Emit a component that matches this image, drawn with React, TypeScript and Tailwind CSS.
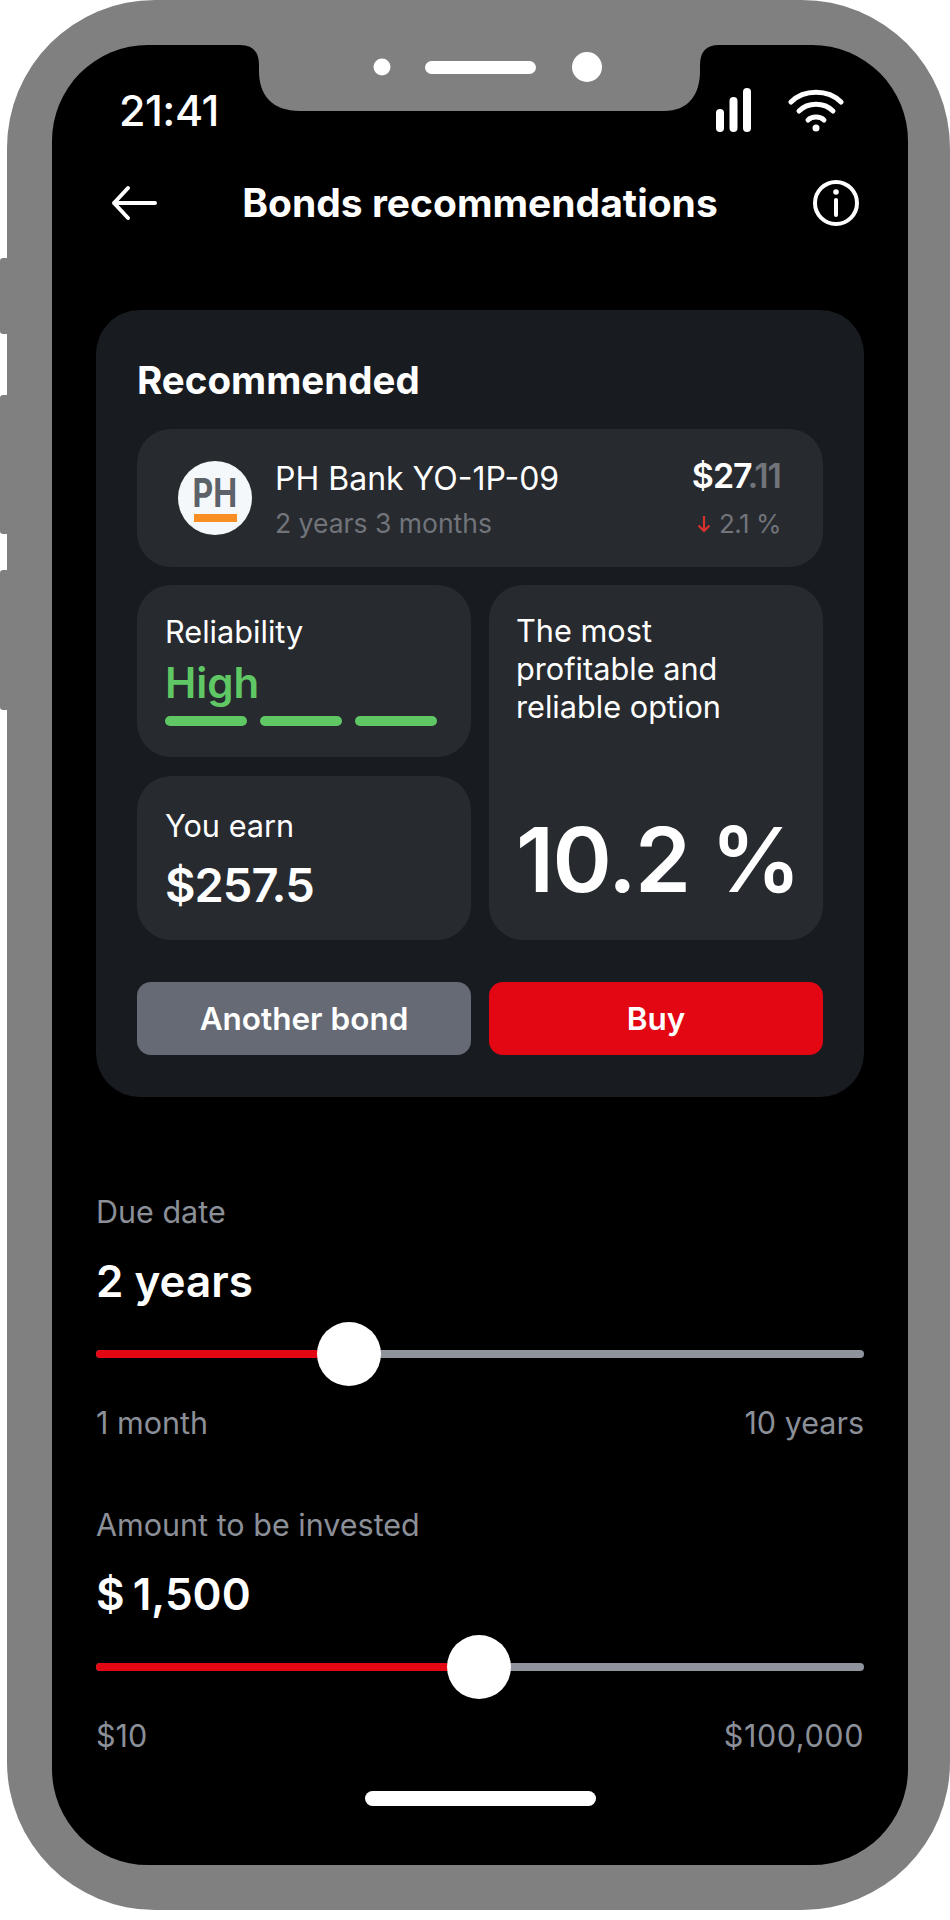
function Slider({ label, value, min, max, fill, thumb, maxClass = "", valueClass = "" }: { label: string; value: string; min: string; max: string; fill: string; thumb: string; maxClass?: string; valueClass?: string }) {
  return (
    <div className="flex flex-col">
      <div className="h-[36px] text-[30.5px] leading-[36px] text-[#8b8f98]">{label}</div>
      <div className={`mt-[26px] h-[50px] text-[44px] leading-[50px] font-semibold text-white ${valueClass}`}>{value}</div>
      <div className="relative mt-[44px] h-[8px] rounded-full bg-[#8f939c]">
        <div className={`h-full rounded-full bg-[#e30613] ${fill}`} />
        <div className={`absolute top-[-28px] h-[64px] w-[64px] rounded-full bg-white ${thumb}`} />
      </div>
      <div className="mt-[47px] flex h-[36px] justify-between text-[30.5px] leading-[36px] text-[#8b8f98]">
        <span>{min}</span>
        <span className={maxClass}>{max}</span>
      </div>
    </div>
  );
}

export default function App() {
  return (
    <div className="relative h-[1920px] w-[950px] overflow-hidden bg-white font-['Inter',sans-serif]">
      <div className="absolute left-0 top-[258px] h-[76px] w-[10px] rounded-l-[3px] bg-[#808080]" />
      <div className="absolute left-0 top-[395px] h-[139px] w-[10px] rounded-l-[3px] bg-[#808080]" />
      <div className="absolute left-0 top-[570px] h-[140px] w-[10px] rounded-l-[3px] bg-[#808080]" />
      <div className="ml-[7px] h-[1910px] w-[943px] rounded-[148px] bg-[#808080] pl-[45px] pr-[42px] pt-[45px]">
        <div className="relative h-[1820px] w-[856px] overflow-hidden rounded-[96px] bg-black px-[44px] pt-[44px]">
          <svg className="absolute left-[170px] top-0" width="500" height="70" viewBox="0 0 500 70">
            <path d="M18 0 Q37 0 37 20 L37 26 C37 50 50 66 78 66 L442 66 C466 66 478 50 478 26 L478 20 Q478 0 497 0 Z" fill="#808080" />
            <circle cx="160" cy="22" r="8.5" fill="#fff" />
            <rect x="203" y="16" width="111" height="13" rx="6.5" fill="#fff" />
            <circle cx="365" cy="22" r="15" fill="#fff" />
          </svg>

          <div className="flex h-[40px] items-center justify-between">
            <span className="ml-[23px] mt-[2px] text-[43px] leading-[40px] font-medium tracking-[-0.5px] text-white">21:41</span>
            <div className="mr-[20px] flex items-end gap-[37px]">
              <svg width="35" height="44" viewBox="0 0 35 44" className="mt-[2px]">
                <rect x="0" y="21" width="8" height="23" rx="4" fill="#fff" />
                <rect x="13.5" y="9" width="8" height="35" rx="4" fill="#fff" />
                <rect x="27" y="0" width="8" height="44" rx="4" fill="#fff" />
              </svg>
              <svg width="56" height="44" viewBox="0 0 56 44" fill="none" stroke="#fff" strokeWidth="5" strokeLinecap="round">
                <path d="M3 14 C16 1 40 1 53 14" />
                <path d="M11 23 C20 14 36 14 45 23" />
                <path d="M20 32 C24 28 32 28 36 32" />
                <circle cx="28" cy="40" r="3.5" fill="#fff" stroke="none" />
              </svg>
            </div>
          </div>

          <div className="mt-[50px] grid h-[48px] grid-cols-[1fr_auto_1fr] items-center">
            <svg width="46" height="36" viewBox="0 0 46 36" fill="none" stroke="#fff" strokeWidth="4" strokeLinecap="round" strokeLinejoin="round" className="ml-[15px]">
              <path d="M44 18 H3 M17 3 L3 18 L17 33" />
            </svg>
            <span className="text-[39px] leading-[48px] font-bold text-white">Bonds recommendations</span>
            <svg width="46" height="46" viewBox="0 0 46 46" fill="none" stroke="#fff" strokeWidth="4" className="mr-[5px] justify-self-end">
              <circle cx="23" cy="23" r="21" />
              <path d="M23 20 L23 35" strokeLinecap="round" />
              <circle cx="23" cy="12" r="2.8" fill="#fff" stroke="none" />
            </svg>
          </div>

          <div className="mt-[83px] rounded-[44px] bg-[#181b1f] px-[41px] pb-[42px] pt-[48px]">
            <div className="h-[44px] text-[38.5px] leading-[44px] font-bold text-white">Recommended</div>
            <div className="mt-[27px] flex h-[138px] items-center justify-between rounded-[34px] bg-[#272a2f] pl-[41px] pr-[42px]">
              <div className="flex items-center gap-[23px]">
                <div className="flex h-[74px] w-[74px] flex-col items-center justify-center rounded-full bg-[#f4f8fb]">
                  <span className="h-[36px] scale-x-[0.8] text-[40px] leading-[36px] font-bold text-[#5c6268]">PH</span>
                  <div className="mt-[3px] h-[8px] w-[43px] bg-[#f98e25]" />
                </div>
                <div className="flex flex-col">
                  <span className="mt-[2px] h-[44px] text-[32px] leading-[44px] text-white">PH Bank YO-1P-09</span>
                  <span className="mt-[4px] h-[36px] text-[26.5px] leading-[36px] text-[#71747a]">2 years 3 months</span>
                </div>
              </div>
              <div className="flex flex-col items-end">
                <span className="h-[44px] text-[34px] leading-[44px] font-semibold tracking-[-1px] text-white">
                  $27<span className="text-[#71747a]">.11</span>
                </span>
                <span className="mt-[8px] flex h-[36px] items-center gap-[8px] text-[26px] leading-[36px] tracking-[-0.5px] text-[#71747a]">
                  <svg width="14" height="18" viewBox="0 0 14 18" fill="none" stroke="#d6322e" strokeWidth="2.2">
                    <path d="M7 1 L7 16 M1.5 10.5 L7 16 L12.5 10.5" />
                  </svg>
                  2.1 %
                </span>
              </div>
            </div>

            <div className="mt-[18px] grid grid-cols-[334px_334px] grid-rows-[172px_164px] gap-x-[18px] gap-y-[19px]">
              <div className="flex flex-col rounded-[34px] bg-[#272a2f] px-[28px] pt-[27px]">
                <span className="h-[40px] text-[30.7px] leading-[40px] text-white">Reliability</span>
                <span className="mt-[6px] h-[50px] text-[42px] leading-[50px] font-semibold text-[#5fc865]">High</span>
                <div className="mt-[8px] flex gap-[13px]">
                  <div className="h-[10px] w-[82px] rounded-full bg-[#5fc865]" />
                  <div className="h-[10px] w-[82px] rounded-full bg-[#5fc865]" />
                  <div className="h-[10px] w-[82px] rounded-full bg-[#5fc865]" />
                </div>
              </div>
              <div className="row-span-2 flex flex-col justify-between rounded-[34px] bg-[#272a2f] px-[27px] pb-[30px] pt-[27px]">
                <div className="text-[30.7px] leading-[38px] text-white">The most<br />profitable and<br />reliable option</div>
                <div className="text-[90px] leading-[100px] font-semibold tracking-[-1.5px] whitespace-nowrap text-white">10.2 %</div>
              </div>
              <div className="flex flex-col rounded-[34px] bg-[#272a2f] px-[28px] pt-[30px]">
                <span className="h-[40px] text-[30.7px] leading-[40px] text-white">You earn</span>
                <span className="mt-[12px] h-[54px] text-[47px] leading-[54px] font-semibold tracking-[-1px] text-white">$257.5</span>
              </div>
            </div>

            <div className="mt-[42px] grid grid-cols-[334px_334px] gap-x-[18px]">
              <div className="flex h-[73px] items-center justify-center rounded-[14px] bg-[#656a75] text-[31.5px] font-semibold text-white">Another bond</div>
              <div className="flex h-[73px] items-center justify-center rounded-[14px] bg-[#e30613] text-[31.5px] font-semibold text-white">Buy</div>
            </div>
          </div>

          <div className="mt-[97px] flex flex-col gap-[66px]">
            <Slider label="Due date" value="2 years" min="1 month" max="10 years" fill="w-[253px]" thumb="left-[221px]" />
            <Slider label="Amount to be invested" value="$ 1,500" min="$10" max="$100,000" fill="w-[383px]" thumb="left-[351px]" maxClass="tracking-[0.6px]" valueClass="[word-spacing:-3px]" />
          </div>

          <div className="mx-auto mt-[37px] h-[15px] w-[231px] rounded-full bg-white" />
        </div>
      </div>
    </div>
  );
}
